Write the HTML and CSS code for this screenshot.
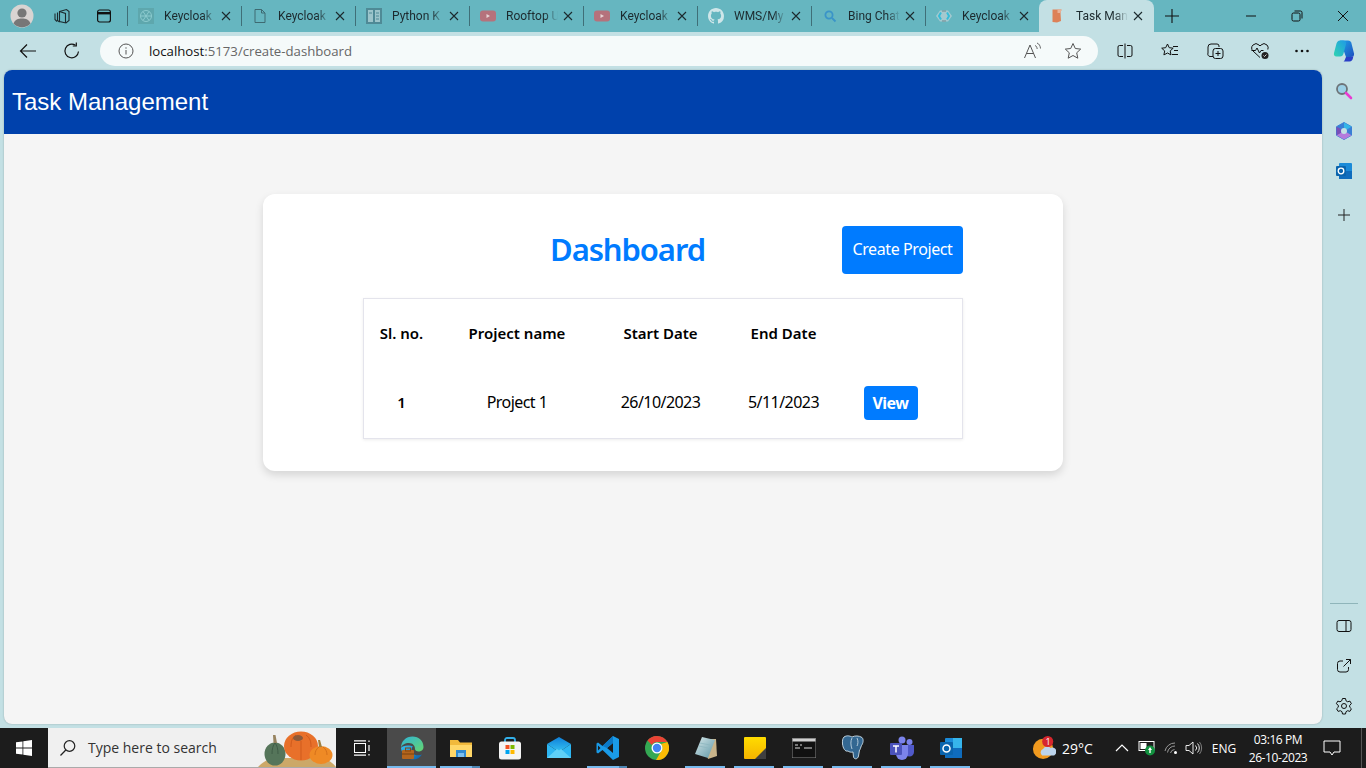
FILE: index.html
```html
<!DOCTYPE html>
<html lang="en">
<head>
  <meta charset="UTF-8" />
  <title>Task Management</title>
  <link rel="stylesheet" href="styles.css">
</head>
<body>
  <svg class="defs" width="0" height="0">
    <defs>
      <symbol id="close" viewBox="0 0 12 12"><path d="M2 2l8 8M10 2l-8 8" stroke="#1c2a2e" stroke-width="1.100" fill="none"/></symbol>
      <symbol id="yt" viewBox="0 0 16 16"><rect y="2.500" width="16" height="11" rx="3" fill="#b5727c"/><path d="M6.500 6v4l3.500-2z" fill="#e8d5d6"/></symbol>
      <linearGradient id="edgeA" x1="0" y1="0" x2="1" y2="1"><stop offset="0" stop-color="#35c1f1"/><stop offset="1" stop-color="#0c59a4"/></linearGradient>
      <linearGradient id="edgeB" x1="0" y1="0" x2="1" y2="1"><stop offset="0" stop-color="#2fb4d8"/><stop offset="1" stop-color="#66d66e"/></linearGradient>
      <linearGradient id="copA" x1="0" y1="0" x2="1" y2="1"><stop offset="0" stop-color="#1fa5e8"/><stop offset="1" stop-color="#1e4fc0"/></linearGradient>
      <linearGradient id="copB" x1="0" y1="1" x2="1" y2="0"><stop offset="0" stop-color="#2fd5b0"/><stop offset="1" stop-color="#1f9ae6"/></linearGradient>
      <linearGradient id="mailG" x1="0" y1="0" x2="0" y2="1"><stop offset="0" stop-color="#0f7fd8"/><stop offset="1" stop-color="#35c3f3"/></linearGradient>
      <linearGradient id="noteG" x1="0" y1="0" x2="1" y2="1"><stop offset="0" stop-color="#d8e8ea"/><stop offset="1" stop-color="#5d97a6"/></linearGradient>
      <linearGradient id="stickyG" x1="0" y1="0" x2="0" y2="1"><stop offset="0" stop-color="#ffdc00"/><stop offset="1" stop-color="#f5b400"/></linearGradient>
    </defs>
  </svg>

  <header class="tabstrip">
    <div class="avatar">
      <svg width="24" height="24" viewBox="0 0 24 24"><circle cx="12" cy="12" r="11.500" fill="#d9d4d2"/><circle cx="12" cy="9" r="4.600" fill="#777"/><path d="M3.500 19.500C5 15.500 8 14.500 12 14.500s7 1 8.500 5A11.500 11.500 0 0 1 3.500 19.500z" fill="#777"/></svg>
    </div>
    <div class="strip-btn strip-btn-first">
      <svg width="18" height="18" viewBox="0 0 18 18" fill="none" stroke="#1c2a2e" stroke-width="1.100"><path d="M6.500 4.500l7-2 2.500 2v9l-3 2.500-6.500-1.500z"/><path d="M6.500 4.500l6 2v9.500M4.500 5.500v8l2 1.500M2 6.500v6l2 2"/></svg>
    </div>
    <div class="strip-btn">
      <svg width="16" height="16" viewBox="0 0 16 16" fill="none" stroke="#111" stroke-width="1.200"><rect x="1.600" y="2" width="12.800" height="12" rx="2"/><path d="M1.600 5.200h12.800" stroke-width="2.400"/></svg>
    </div>

    <div class="tab">
      <svg class="favicon" width="16" height="16" viewBox="0 0 16 16"><rect width="16" height="16" fill="#5ea7ad"/><g fill="none" stroke="#8ccbcf" stroke-width="1"><circle cx="8" cy="8" r="5.500"/><path d="M5 3.500l6 9M11 3.500l-6 9M2.500 8h11"/></g></svg>
      <span class="tab-label">Keycloak</span>
      <svg class="tab-close"><use href="#close"/></svg>
    </div>
    <div class="tab">
      <svg class="favicon" width="16" height="16" viewBox="0 0 16 16" fill="none" stroke="#3e6a72" stroke-width="1"><path d="M3 1.500h6.500L13 5v9.500H3zM9.500 1.500V5H13"/></svg>
      <span class="tab-label">Keycloak</span>
      <svg class="tab-close"><use href="#close"/></svg>
    </div>
    <div class="tab">
      <svg class="favicon" width="16" height="16" viewBox="0 0 16 16"><rect width="16" height="16" fill="#4f8a96"/><path d="M2 2h5v12H2zM9 2h5v12H9z" fill="#9cc5cb"/><path d="M10 5h3M10 8h3M10 11h3M3 5h3" stroke="#4f8a96"/></svg>
      <span class="tab-label">Python K</span>
      <svg class="tab-close"><use href="#close"/></svg>
    </div>
    <div class="tab">
      <svg class="favicon" width="16" height="16"><use href="#yt"/></svg>
      <span class="tab-label">Rooftop U</span>
      <svg class="tab-close"><use href="#close"/></svg>
    </div>
    <div class="tab">
      <svg class="favicon" width="16" height="16"><use href="#yt"/></svg>
      <span class="tab-label">Keycloak</span>
      <svg class="tab-close"><use href="#close"/></svg>
    </div>
    <div class="tab">
      <svg class="favicon" width="16" height="16" viewBox="0 0 16 16"><path fill="#cfe6e9" d="M8 0C3.580 0 0 3.580 0 8c0 3.540 2.290 6.530 5.470 7.590.4.070.55-.17.55-.38 0-.19-.01-.82-.01-1.490-2.010.37-2.530-.49-2.690-.94-.09-.23-.48-.94-.82-1.130-.28-.15-.68-.52-.01-.53.63-.01 1.080.58 1.230.82.72 1.210 1.870.87 2.330.66.07-.52.28-.87.51-1.070-1.780-.2-3.640-.89-3.640-3.950 0-.87.31-1.590.82-2.150-.08-.2-.36-1.020.08-2.120 0 0 .67-.21 2.200.82.64-.18 1.320-.27 2-.27.68 0 1.360.09 2 .27 1.530-1.040 2.200-.82 2.200-.82.44 1.100.16 1.920.08 2.120.51.56.82 1.270.82 2.150 0 3.070-1.870 3.750-3.650 3.950.29.25.54.73.54 1.480 0 1.070-.01 1.930-.01 2.200 0 .21.15.46.55.38A8.013 8.013 0 0016 8c0-4.420-3.580-8-8-8z"/></svg>
      <span class="tab-label">WMS/My</span>
      <svg class="tab-close"><use href="#close"/></svg>
    </div>
    <div class="tab">
      <svg class="favicon" width="16" height="16" viewBox="0 0 16 16" fill="none" stroke="#3a94c8" stroke-width="1.800"><circle cx="7" cy="7" r="3.600"/><path d="M10 10l3.500 3.500"/></svg>
      <span class="tab-label">Bing Chat</span>
      <svg class="tab-close"><use href="#close"/></svg>
    </div>
    <div class="tab">
      <svg class="favicon" width="16" height="16" viewBox="0 0 16 16"><path d="M4 2.500h8L16 8l-4 5.500H4L0 8z" fill="#a4c9cf"/><path d="M5 4.500L3 8l2 3.500M11 4.500L13 8l-2 3.500" stroke="#35bcd8" stroke-width="2" fill="none"/><path d="M6 3h4M6 13h4" stroke="#7f9da4" stroke-width="1.500"/></svg>
      <span class="tab-label">Keycloak</span>
      <svg class="tab-close"><use href="#close"/></svg>
    </div>
    <div class="tab tab-active">
      <svg class="favicon" width="16" height="16" viewBox="0 0 16 16"><path d="M3.500 1.500h9l-1 3.500 .5 8-4 1.500-4.500-.5z" fill="#dd8158"/><path d="M8.500 1.500h4l-1 3.500H8.500z" fill="#eab197"/></svg>
      <span class="tab-label">Task Man</span>
      <svg class="tab-close"><use href="#close"/></svg>
    </div>
    <div class="new-tab">
      <svg width="16" height="16" viewBox="0 0 16 16"><path d="M8 1v14M1 8h14" stroke="#111" stroke-width="1.100"/></svg>
    </div>
    <div class="win-controls">
      <div class="win-btn"><svg width="12" height="12" viewBox="0 0 12 12"><path d="M1 6h10" stroke="#111"/></svg></div>
      <div class="win-btn"><svg width="12" height="12" viewBox="0 0 12 12" fill="none" stroke="#111"><rect x="1" y="3" width="8" height="8" rx="1.500"/><path d="M3.500 1h6a1.500 1.500 0 0 1 1.500 1.500v6"/></svg></div>
      <div class="win-btn"><svg width="12" height="12" viewBox="0 0 12 12"><path d="M1 1l10 10M11 1L1 11" stroke="#111"/></svg></div>
    </div>
  </header>

  <div class="toolbar">
    <div class="tool-btn tool-back">
      <svg width="18" height="18" viewBox="0 0 18 18" fill="none" stroke="#111" stroke-width="1.200"><path d="M17 9H1.500M8 2.500L1.500 9 8 15.500"/></svg>
    </div>
    <div class="tool-btn tool-reload">
      <svg width="18" height="18" viewBox="0 0 18 18" fill="none" stroke="#111" stroke-width="1.200"><path d="M15.500 9.500A6.800 6.800 0 1 1 12.500 3.300"/><path d="M13.300 .5v3.500H9.800"/></svg>
    </div>
    <div class="address">
      <svg class="address-info" width="16" height="16" viewBox="0 0 16 16" fill="none" stroke="#555"><circle cx="8" cy="8" r="7"/><path d="M8 7v4.500M8 4.300v1.400"/></svg>
      <span class="url"><span class="url-host">localhost</span>:5173/create-dashboard</span>
      <svg class="address-read" width="20" height="18" viewBox="0 0 20 18" fill="none" stroke="#555"><path d="M1.500 16L7 3l5.500 13M3.500 11.500h7"/><path d="M12 3.500c1.500.5 2 1.800 2.200 3.500M14 1c2.200.8 3.300 3 3.500 5.500" stroke-width=".9"/></svg>
      <svg class="address-star" width="18" height="18" viewBox="0 0 18 18" fill="none" stroke="#555"><path d="M9 1.500l2.300 5 5.400.6-4 3.700 1.100 5.400L9 13.500l-4.800 2.700 1.100-5.400-4-3.700 5.400-.6z"/></svg>
    </div>
    <div class="tool-btn tool-split">
      <svg width="16" height="16" viewBox="0 0 16 16" fill="none" stroke="#111"><path d="M6 2.500H2.500a1.500 1.500 0 0 0-1.500 1.500v8a1.500 1.500 0 0 0 1.500 1.500H6M10 2.500h3.500A1.500 1.500 0 0 1 15 4v8a1.500 1.500 0 0 1-1.500 1.500H10M8 .5v15"/></svg>
    </div>
    <div class="tool-btn">
      <svg width="18" height="18" viewBox="0 0 18 18" fill="none" stroke="#111"><path d="M6.500 2l1.700 3.700 4 .5-3 2.700.8 4L6.500 11l-3.600 1.900.8-4-3-2.700 4-.5zM12 4.500h5M13 8.500h4M11 12.500h6"/></svg>
    </div>
    <div class="tool-btn">
      <svg width="18" height="18" viewBox="0 0 18 18" fill="none" stroke="#111"><path d="M7 14.500H4A2.500 2.500 0 0 1 2 11V5a3 3 0 0 1 3-3h6a2 2 0 0 1 2 2v1"/><rect x="7" y="6.500" width="10" height="10" rx="2.500"/><path d="M12 9v5M9.500 11.500h5"/></svg>
    </div>
    <div class="tool-btn">
      <svg width="20" height="18" viewBox="0 0 20 18" fill="none" stroke="#111"><path d="M10 15.500L3 9a4 4 0 0 1 0-6 4.300 4.300 0 0 1 6 0l1 1 1-1a4.300 4.300 0 0 1 6 0 4 4 0 0 1 .8 4.500"/><path d="M1.500 8.500h4l1.500-2.500 2.500 5 1.500-2.500h2.500"/><circle cx="15" cy="13.500" r="3.500" fill="#222" stroke="none"/><path d="M13.500 13.500l1 1 2-2" stroke="#fff" stroke-width=".8"/></svg>
    </div>
    <div class="tool-btn tool-more">
      <svg width="16" height="4" viewBox="0 0 16 4" fill="#111"><circle cx="2.500" cy="2" r="1.300"/><circle cx="8" cy="2" r="1.300"/><circle cx="13.500" cy="2" r="1.300"/></svg>
    </div>
    <div class="tool-btn tool-copilot">
      <svg width="24" height="24" viewBox="0 0 24 24"><path d="M8 1.500h8c2 0 3 1.200 3.500 3l2.500 10c.5 2-1 3.500-3 3.500h-5z" fill="url(#copA)"/><path d="M8 1.500C6 1.500 5 3 4.500 4.500L2 14c-.5 2 .5 3.500 2.500 3.500H8c2 0 3-1 3.500-3L14 5c.5-2-1-3.500-3-3.500z" fill="url(#copB)"/><path d="M11.500 22.500h6c2 0 3-1.500 3.500-3.500l.5-3c-.5 2-2 2-3.500 2h-4c-1 2-1.500 4.500-2.500 4.500z" fill="#2a3fc7"/></svg>
    </div>
  </div>

  <div class="browser">
    <div class="page">
      <div class="page-header">Task Management</div>
      <main class="page-body">
        <section class="card">
          <div class="card-head">
            <h1 class="card-title">Dashboard</h1>
            <button class="btn btn-create">Create Project</button>
          </div>
          <table class="project-table">
            <colgroup>
              <col class="col-no"><col class="col-name"><col class="col-start"><col class="col-end"><col class="col-view">
            </colgroup>
            <thead>
              <tr><th>Sl. no.</th><th>Project name</th><th>Start Date</th><th>End Date</th><th></th></tr>
            </thead>
            <tbody>
              <tr>
                <th>1</th><td>Project 1</td><td>26/10/2023</td><td>5/11/2023</td>
                <td class="cell-view"><button class="btn btn-view">View</button></td>
              </tr>
            </tbody>
          </table>
        </section>
      </main>
    </div>
    <aside class="sidebar">
      <div class="side-btn">
        <svg width="18" height="18" viewBox="0 0 18 18"><circle cx="7" cy="7" r="5" fill="#9ad0e6" stroke="#6d7478" stroke-width="1.800"/><path d="M11 11l5 5" stroke="#e83bd2" stroke-width="2.600" stroke-linecap="round"/></svg>
      </div>
      <div class="side-btn">
        <svg width="18" height="18" viewBox="0 0 18 18"><path d="M9 .5l7.500 4.200v8.600L9 17.500 1.500 13.300V4.700z" fill="#3a7fd5" stroke="#3a7fd5" stroke-linejoin="round"/><path d="M9 .5l7.500 4.200L12 7.500 9 6z" fill="#35b6e8"/><path d="M1.500 13.300L9 17.500l7.500-4.200-4.500-2.800H6z" fill="#b57bdc"/><path d="M1.500 4.700v8.600l4.500-2.500V7z" fill="#7a4fb8"/><circle cx="9" cy="9" r="3" fill="#c3e0e4"/></svg>
      </div>
      <div class="side-btn">
        <svg width="18" height="18" viewBox="0 0 18 18"><rect x="4" y="1" width="13" height="16" rx="1" fill="#1a8ad8"/><path d="M4 9l13 0v8H4z" fill="#0f6cbd"/><rect x="1" y="4" width="10" height="10" rx="1" fill="#0a64ad"/><circle cx="6" cy="9" r="2.800" fill="none" stroke="#fff" stroke-width="1.300"/></svg>
      </div>
      <div class="side-btn side-add">
        <svg width="14" height="14" viewBox="0 0 14 14"><path d="M7 1v12M1 7h12" stroke="#222"/></svg>
      </div>
      <div class="side-bottom">
        <div class="side-divider"></div>
        <div class="side-btn">
          <svg width="16" height="14" viewBox="0 0 16 14" fill="none" stroke="#111"><rect x="1" y="1.500" width="14" height="11" rx="2"/><path d="M10 1.500v11"/></svg>
        </div>
        <div class="side-btn">
          <svg width="16" height="16" viewBox="0 0 16 16" fill="none" stroke="#111"><path d="M7 3H4a2.500 2.500 0 0 0-2.500 2.500v6A2.500 2.500 0 0 0 4 14h6a2.500 2.500 0 0 0 2.500-2.500V9M7.500 8.500L14.500 1.500M10 1.500h4.500V6"/></svg>
        </div>
        <div class="side-btn">
          <svg width="18" height="18" viewBox="0 0 18 18" fill="none" stroke="#111"><path d="M7.500 1.500h3l.5 2.300 1.700 1 2.200-.7 1.500 2.600-1.700 1.600v1.900l1.700 1.600-1.500 2.600-2.200-.7-1.700 1-.5 2.300h-3l-.5-2.300-1.700-1-2.200.7-1.500-2.600 1.700-1.600V8.300L1.300 6.700l1.500-2.600 2.200.7 1.700-1z"/><circle cx="9" cy="9" r="2.500"/></svg>
        </div>
      </div>
    </aside>
  </div>

  <footer class="taskbar">
    <div class="start">
      <svg width="16" height="16" viewBox="0 0 16 16" fill="#fff"><path d="M0 2.300l6.500-.9v6.200H0zM7.300 1.300L16 0v7.600H7.300zM0 8.400h6.500v6.200L0 13.700zM7.300 8.400H16V16l-8.700-1.300z"/></svg>
    </div>
    <div class="search">
      <svg width="18" height="18" viewBox="0 0 18 18" fill="none" stroke="#222" stroke-width="1.200"><circle cx="10.500" cy="7" r="5.300"/><path d="M6.800 11L1.500 16.500"/></svg>
      <span class="search-text">Type here to search</span>
      <svg class="search-art" width="78" height="40" viewBox="0 0 78 40">
        <path d="M0 40C6 33 14 31 24 31h36c8 0 14 4 18 9z" fill="#cca868"/>
        <ellipse cx="17" cy="27" rx="10.500" ry="11.500" fill="#55755a"/>
        <path d="M14 27c0-5 1-9 3-11M20 27c0-5-1-9-3-11" stroke="#3f5c46" fill="none"/>
        <path d="M15.500 16l-.5-8h2.500l1.500 8" fill="#97835f"/>
        <ellipse cx="43" cy="19" rx="17" ry="14.500" fill="#e8702a"/>
        <path d="M33 20c0-6 1-9 5-12M53 20c0-6-1-9-5-12M43 33V14" stroke="#cf5a1c" fill="none"/>
        <ellipse cx="40" cy="11" rx="5" ry="3" fill="#8d5a3a"/>
        <ellipse cx="63" cy="28" rx="11.500" ry="9" fill="#ef8a25"/>
        <path d="M57 28c0-3 1-6 4-8M69 28c0-3-1-6-4-8" stroke="#d5701a" fill="none"/>
        <path d="M61 20l-1-7h2l2 7" fill="#a08040"/>
      </svg>
    </div>
    <div class="task-view">
      <svg width="18" height="16" viewBox="0 0 18 16" fill="none" stroke="#fff"><rect x="1.500" y="3.500" width="11" height="9"/><path d="M1 .8h12M1 15.200h12M16 .5v1.500M16 5v6M16 14v1.500" stroke-width="1.200"/></svg>
    </div>

    <div class="app app-active">
      <svg width="26" height="26" viewBox="0 0 26 26"><path d="M2 13C2 6 7 1.500 13.500 1.500 20 1.500 24.500 6 24.500 12c0 3-2.500 4.500-5 4.500-2 0-3.500-1-3.500-2.500 0-3-2-6-6-6-4 0-7.500 2-8 5z" fill="url(#edgeB)"/><path d="M2 13c.5 6 6 11.500 12 11.500 4 0 7-2 9-5-3 1.500-8 1-10-2-1-2-.5-5 1-6-4-2-11-1-12 1.500z" fill="url(#edgeA)"/><rect x="3" y="15" width="12" height="9" rx="1" fill="#b5651d"/><rect x="6.500" y="13" width="5" height="3" fill="none" stroke="#8a4a10"/><path d="M3 19h12" stroke="#7a430f"/></svg>
    </div>
    <div class="app app-open">
      <svg width="24" height="22" viewBox="0 0 24 22"><path d="M1 3h8l2 2.500h12V20H1z" fill="#f1b93c"/><path d="M1 8h22v12H1z" fill="#ffd768"/><rect x="7" y="13" width="10" height="7" fill="#2f8ad0"/><rect x="9" y="16" width="6" height="4" fill="#7cc0ee"/></svg>
      <span class="app-stack"></span>
    </div>
    <div class="app">
      <svg width="24" height="24" viewBox="0 0 24 24"><path d="M7 6V4a2 2 0 0 1 2-2h6a2 2 0 0 1 2 2v2" fill="none" stroke="#33b0ea" stroke-width="1.800"/><rect x="1" y="5.500" width="22" height="18" rx="2.500" fill="#f4f4f4"/><rect x="7.500" y="9" width="4" height="4" fill="#f25022"/><rect x="12.500" y="9" width="4" height="4" fill="#7fba00"/><rect x="7.500" y="14" width="4" height="4" fill="#00a4ef"/><rect x="12.500" y="14" width="4" height="4" fill="#ffb900"/></svg>
    </div>
    <div class="app">
      <svg width="26" height="24" viewBox="0 0 26 24"><path d="M1 8L13 1l12 7-12 8z" fill="url(#mailG)"/><path d="M1 8v14h24V8L13 16z" fill="#2db6f2"/><path d="M1 22l10-9 2 1.500 2-1.500 10 9z" fill="#5fd0f7"/></svg>
    </div>
    <div class="app app-open">
      <svg width="24" height="24" viewBox="0 0 24 24"><path d="M17 0l6 3v18l-6 3L6.500 14 2 17.500 .5 16.500v-9L2 6.500 6.500 10z" fill="#1a9be8"/><path d="M17 7l-6 5 6 5z" fill="#1c1c1c"/><path d="M2 9.500L4.500 12 2 14.500z" fill="#1c1c1c"/><path d="M17 0v7l-6 5-4.500-2z" fill="#0b78c6"/></svg>
      <span class="app-stack"></span>
    </div>
    <div class="app">
      <svg width="24" height="24" viewBox="0 0 24 24"><circle cx="12" cy="12" r="12" fill="#34a853"/><path d="M12 0a12 12 0 0 1 10.400 6H12A6 6 0 0 0 6.800 9L2.500 4.500A12 12 0 0 1 12 0z" fill="#ea4335"/><path d="M22.400 6A12 12 0 0 1 11 24l5-8.500A6 6 0 0 0 16 8z" fill="#fbbc05"/><circle cx="12" cy="12" r="5.500" fill="#fff"/><circle cx="12" cy="12" r="4.200" fill="#4285f4"/></svg>
    </div>
    <div class="app app-open">
      <svg width="24" height="24" viewBox="0 0 24 24"><path d="M9 3l13 0 1 17-9 3z" fill="#c9b48a"/><path d="M8 1l13 3-7 18L1 18z" fill="url(#noteG)"/><path d="M6 7l10 2M5 10l9 2" stroke="#8db6bf" stroke-width=".8"/></svg>
    </div>
    <div class="app app-open">
      <svg width="22" height="22" viewBox="0 0 22 22"><rect width="22" height="22" rx="1" fill="url(#stickyG)"/><path d="M11 22l11-11v11z" fill="#3f3f3f"/></svg>
    </div>
    <div class="app app-open">
      <svg width="24" height="20" viewBox="0 0 24 20"><rect width="24" height="20" fill="#111" stroke="#888"/><rect x=".5" y=".5" width="23" height="3" fill="#d0d0d0"/><path d="M3 7h3M8 7h2M12 10h8M3 10h5" stroke="#ddd"/></svg>
    </div>
    <div class="app app-open">
      <svg width="24" height="26" viewBox="0 0 24 26"><path d="M3 2c3-2 6-1 8 0 3-1.500 7-1.500 10 .5 2 2 1 6-.5 8-1 2-1 4-2 4.500l-1 6c-.5 3-4 4-5 1l-.5-5c-2 .5-4 0-5-1-3 1-5-3-5.500-7C1.300 6 1.500 3.500 3 2z" fill="#336791" stroke="#cfe0ea" stroke-width=".9"/><path d="M11 3c-1.500 3-1.500 7 0 11M16 3c1.500 3 1 6 0 8" stroke="#cfe0ea" stroke-width=".8" fill="none"/></svg>
    </div>
    <div class="app app-open">
      <svg width="26" height="24" viewBox="0 0 26 24"><circle cx="20.500" cy="6" r="3" fill="#7b83eb"/><circle cx="13" cy="4" r="3.500" fill="#7b83eb"/><path d="M16 9h9v7a4.500 4.500 0 0 1-9 0z" fill="#5059c9"/><path d="M7 9h12v9a6 6 0 0 1-12 0z" fill="#7b83eb"/><rect x="1" y="7" width="12" height="12" rx="1" fill="#4b53bc"/><path d="M4 10h6M7 10v6.500" stroke="#fff" stroke-width="1.500"/></svg>
    </div>
    <div class="app app-open">
      <svg width="24" height="24" viewBox="0 0 24 24"><rect x="6" y="2" width="17" height="20" rx="1" fill="#1a8ad8"/><path d="M6 12h17v10H6z" fill="#0f6cbd"/><path d="M14 2h9v10h-9z" fill="#36b5ec"/><rect x="1" y="6" width="13" height="13" rx="1" fill="#0a64ad"/><circle cx="7.500" cy="12.500" r="3.500" fill="none" stroke="#fff" stroke-width="1.500"/></svg>
    </div>

    <div class="tray">
      <div class="weather">
        <svg width="24" height="24" viewBox="0 0 26 26"><circle cx="12" cy="14" r="11" fill="#f19a1f"/><path d="M11 21a4 4 0 0 1 1-7 5 5 0 0 1 8-1 4 4 0 0 1 4 8z" fill="#bcd4ec"/><circle cx="17" cy="6" r="6" fill="#d6262d"/></svg>
        <span class="badge">1</span>
        <span class="temp">29°C</span>
      </div>
      <div class="tray-icon tray-chevron">
        <svg width="14" height="8" viewBox="0 0 14 8" fill="none" stroke="#fff" stroke-width="1.200"><path d="M1 7l6-6 6 6"/></svg>
      </div>
      <div class="tray-icon tray-battery">
        <svg width="20" height="16" viewBox="0 0 20 16"><rect x="1" y="1.500" width="15" height="9" fill="none" stroke="#fff"/><rect x="2.500" y="3" width="6" height="6" fill="#fff"/><circle cx="12" cy="10.500" r="5" fill="#12913f"/><path d="M12 7l-2 3h1.300v3h1.400v-3H14z" fill="#fff"/></svg>
      </div>
      <div class="tray-icon tray-wifi">
        <svg width="16" height="14" viewBox="0 0 16 14" fill="none" stroke="#9a9a9a"><path d="M1 10a10 10 0 0 1 10-8M3.500 11.500a7.500 7.500 0 0 1 7.500-6.500M6.500 12a4.500 4.500 0 0 1 4-3.500"/><circle cx="11.500" cy="11.500" r="1.500" fill="#fff" stroke="none"/></svg>
      </div>
      <div class="tray-icon tray-volume">
        <svg width="18" height="14" viewBox="0 0 18 14" fill="none" stroke="#fff" stroke-width=".9"><path d="M1 4.500h3L8 1v12L4 9.500H1z"/><path d="M10.500 4.500a3.500 3.500 0 0 1 0 5M12.500 2.500a6.500 6.500 0 0 1 0 9"/><path d="M14.500 1a9.500 9.500 0 0 1 0 12" stroke="#888"/></svg>
      </div>
      <div class="tray-lang">ENG</div>
      <div class="clock"><span>03:16 PM</span><span>26-10-2023</span></div>
      <div class="tray-notify">
        <svg width="18" height="16" viewBox="0 0 18 16" fill="none" stroke="#fff"><path d="M1 1h16v11h-6l-2 3-2-3H1z"/></svg>
      </div>
      <div class="show-desktop"></div>
    </div>
  </footer>
</body>
</html>
```

FILE: styles.css
```css
* {
  box-sizing: border-box;
}
body {
  margin: 0;
  height: 100vh;
  overflow: hidden;
  display: flex;
  flex-direction: column;
  background: #c3e0e4;
  font-family: "Open Sans", sans-serif;
}
.defs {
  position: absolute;
}

/* tab strip */
.tabstrip {
  height: 32px;
  flex: none;
  display: flex;
  align-items: center;
  background: #66b6c0;
}
.avatar {
  width: 44px;
  display: flex;
  justify-content: center;
}
.strip-btn {
  width: 47px;
  display: flex;
  justify-content: center;
}
.strip-btn-first {
  width: 36px;
}
.tab {
  width: 114px;
  height: 32px;
  flex: none;
  display: flex;
  align-items: center;
  padding-left: 11px;
  position: relative;
}
.tab::before {
  content: "";
  position: absolute;
  left: 0;
  top: 6px;
  height: 20px;
  width: 1px;
  background: #3f6f78;
}
.favicon {
  flex: none;
}
.tab-label {
  width: 52px;
  margin-left: 10px;
  font-family: Roboto, sans-serif;
  font-size: 12px;
  color: #1c2a2e;
  white-space: nowrap;
  -webkit-mask-image: linear-gradient(to right, #000 75%, transparent 100%);
  mask-image: linear-gradient(to right, #000 75%, transparent 100%);
}
.tab-close {
  width: 12px;
  height: 12px;
  margin-left: 4px;
  flex: none;
}
.tab-active {
  width: 115px;
  background: #c3e0e4;
  border-radius: 8px 8px 0 0;
  padding-left: 10px;
}
.tab-active::before {
  display: none;
}
.tab-active .tab-label {
  margin-left: 11px;
}
.new-tab {
  width: 36px;
  display: flex;
  justify-content: center;
}
.win-controls {
  margin-left: auto;
  display: flex;
}
.win-btn {
  width: 46px;
  display: flex;
  justify-content: center;
}

/* toolbar */
.toolbar {
  height: 38px;
  flex: none;
  display: flex;
  align-items: center;
  background: #c3e0e4;
}
.tool-btn {
  width: 45px;
  display: flex;
  justify-content: center;
  flex: none;
}
.tool-back {
  width: 50px;
  margin-left: 4px;
  padding-right: 2px;
}
.tool-reload {
  width: 44px;
  margin-left: -4px;
}
.tool-split {
  margin-left: 4px;
}
.tool-more {
  width: 40px;
}
.tool-copilot {
  width: 44px;
}
.address {
  width: 998px;
  height: 30px;
  margin-left: 6px;
  flex: none;
  display: flex;
  align-items: center;
  padding-left: 18px;
  background: #f5fafa;
  border-radius: 15px;
}
.url {
  margin-left: 15px;
  font-size: 13.2px;
  color: #666;
}
.url-host {
  color: #111;
}
.address-read {
  margin-left: auto;
}
.address-star {
  margin-left: 21px;
  margin-right: 16px;
}

/* page area */
.browser {
  flex: 1;
  min-height: 0;
  display: flex;
  padding: 0 0 4px 4px;
}
.page {
  flex: 1;
  display: flex;
  flex-direction: column;
  background: #f5f5f5;
  border-radius: 8px;
  overflow: hidden;
  box-shadow: 0 0 2px rgba(0,0,0,0.25);
}
.page-header {
  height: 64px;
  flex: none;
  display: flex;
  align-items: center;
  padding-left: 8px;
  background: #0041ac;
  color: #fff;
  font-family: "Liberation Sans", Arial, sans-serif;
  font-size: 24px;
}
.page-body {
  flex: 1;
  padding-top: 60px;
}
.card {
  width: 800px;
  margin: 0 auto;
  padding: 32px 100px;
  background: #fff;
  border-radius: 12px;
  box-shadow: 0 4px 8px rgba(0,0,0,0.13);
  font-family: "Noto Sans", sans-serif;
}
.card-head {
  display: flex;
  align-items: center;
  margin-left: 50px;
  margin-bottom: 24px;
}
.card-title {
  flex: 1;
  margin: 0;
  padding-bottom: 2px;
  text-align: center;
  font-size: 31px;
  font-weight: 600;
  letter-spacing: -1.100px;
  color: #007bff;
}
.btn {
  border: none;
  background: #007bff;
  color: #fff;
  font-family: "Noto Sans", sans-serif;
  border-radius: 4px;
}
.btn-create {
  width: 121px;
  height: 48px;
  padding: 0 0 3px;
  font-size: 16px;
  letter-spacing: -0.400px;
}
.btn-view {
  width: 54px;
  height: 34px;
  padding: 0;
  font-size: 16px;
  font-weight: 700;
  letter-spacing: -0.500px;
}
.project-table {
  width: 600px;
  table-layout: fixed;
  border: 1px solid #e4e4ec;
  border-collapse: separate;
  border-spacing: 0;
  box-shadow: 0 1px 3px rgba(0,0,0,0.08);
  color: #000;
  font-size: 15px;
}
.project-table th,
.project-table td {
  padding: 0;
  text-align: center;
  font-weight: 400;
}
.project-table th {
  font-weight: 600;
}
.project-table thead tr {
  height: 68px;
}
.project-table tbody tr {
  height: 71px;
}
.project-table tbody td,
.project-table tbody th {
  padding-bottom: 2px;
}
.project-table tbody td {
  font-size: 16px;
  letter-spacing: -0.550px;
}
.col-no { width: 75px; }
.col-name { width: 156px; }
.col-start { width: 131px; }
.col-end { width: 115px; }
.col-view { width: 121px; }
.project-table tbody .cell-view {
  padding: 0 22px 0 0;
}

/* right sidebar */
.sidebar {
  width: 44px;
  flex: none;
  display: flex;
  flex-direction: column;
  padding-top: 1px;
}
.side-btn {
  height: 40px;
  display: flex;
  align-items: center;
  justify-content: center;
  flex: none;
}
.side-add {
  margin-top: 4px;
}
.side-bottom {
  margin-top: auto;
  margin-bottom: -2px;
}
.side-divider {
  height: 1px;
  margin: 0 8px 2px;
  background: #8fb5ba;
}

/* taskbar */
.taskbar {
  height: 40px;
  flex: none;
  display: flex;
  background: #1c1c1c;
}
.start {
  width: 48px;
  display: flex;
  align-items: center;
  justify-content: center;
}
.search {
  width: 288px;
  display: flex;
  align-items: center;
  padding-left: 11px;
  position: relative;
  background: #f0f0f0;
  border-bottom: 1px solid #aaa;
}
.search-text {
  margin-left: 11px;
  font-size: 14px;
  color: #333;
}
.search-art {
  position: absolute;
  right: 0;
  bottom: 0;
}
.task-view {
  width: 51px;
  display: flex;
  align-items: center;
  justify-content: center;
}
.app {
  width: 49px;
  display: flex;
  align-items: center;
  justify-content: center;
  position: relative;
}
.app-open::after {
  content: "";
  position: absolute;
  left: 4px;
  right: 5px;
  bottom: 0;
  height: 2px;
  background: #76b9ed;
}
.app-stack {
  position: absolute;
  right: 5px;
  bottom: 0;
  width: 8px;
  height: 2px;
  z-index: 1;
  background: #4d86b3;
}
.app-active {
  background: #4a4a4a;
}
.app-active::after {
  content: "";
  position: absolute;
  left: 0;
  right: 0;
  bottom: 0;
  height: 2px;
  background: #76b9ed;
}
.tray {
  margin-left: auto;
  display: flex;
  align-items: center;
  color: #fff;
  font-size: 12px;
}
.weather {
  width: 81px;
  height: 40px;
  display: flex;
  align-items: center;
  padding-left: 2px;
  position: relative;
}
.badge {
  position: absolute;
  left: 12px;
  top: 8px;
  width: 12px;
  text-align: center;
  font-size: 9px;
  line-height: 12px;
}
.temp {
  margin-left: 6px;
  font-size: 14px;
}
.tray-icon {
  display: flex;
  justify-content: center;
}
.tray-chevron { width: 22px; }
.tray-battery { width: 30px; }
.tray-wifi { width: 18px; }
.tray-volume { width: 26px; }
.tray-lang {
  width: 34px;
  text-align: center;
  font-size: 12px;
}
.clock {
  width: 72px;
  margin-left: 1px;
  padding-top: 2px;
  display: flex;
  flex-direction: column;
  align-items: center;
  font-size: 12px;
  letter-spacing: -0.400px;
  line-height: 18px;
}
.tray-notify {
  width: 38px;
  padding-right: 2px;
  display: flex;
  justify-content: center;
}
.show-desktop {
  width: 1px;
  height: 40px;
  margin-left: 9px;
  margin-right: 4px;
  background: #555;
}
```
